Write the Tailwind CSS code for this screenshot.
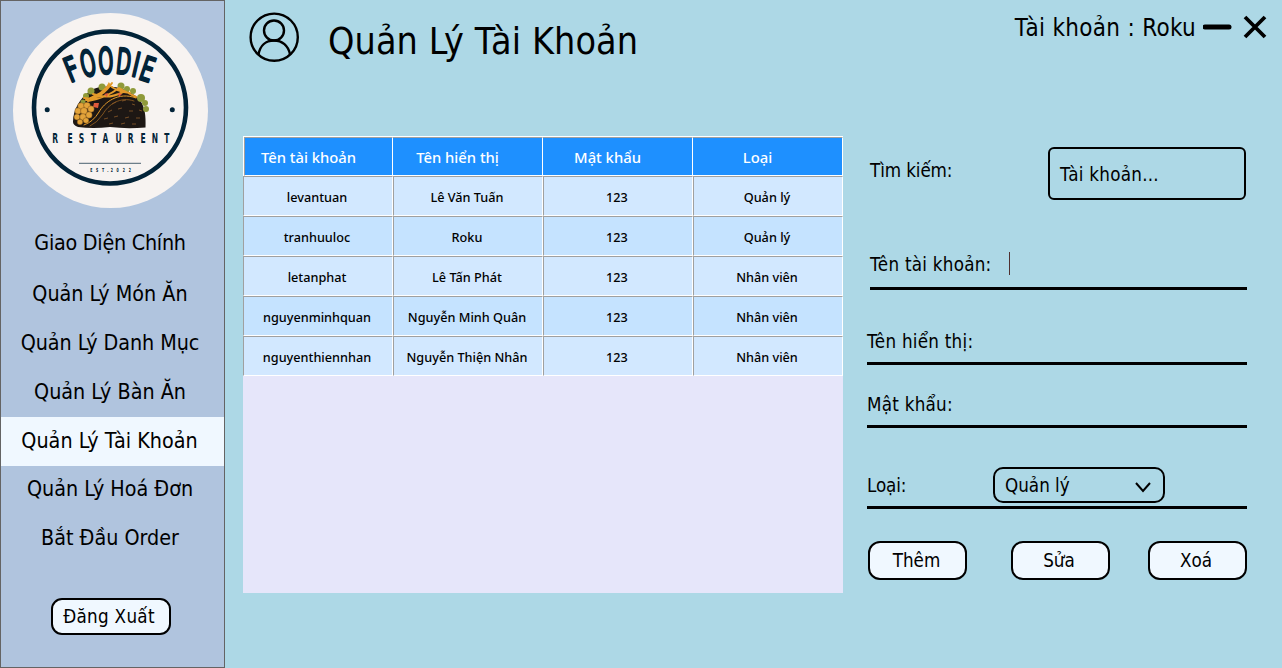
<!DOCTYPE html>
<html lang="vi">
<head>
<meta charset="utf-8">
<title>Quản Lý Tài Khoản</title>
<script src="https://cdn.jsdelivr.net/npm/@tailwindcss/browser@4"></script>
</head>
<body class="flex h-[668px] w-[1282px] overflow-hidden bg-[#add8e6] font-['DejaVu_Sans_Condensed','DejaVu_Sans',sans-serif] text-[18.67px] text-black">
  <aside class="flex w-[225px] shrink-0 flex-col border border-[#646464] bg-[#b0c4de]">
    <svg class="ml-3 mt-3 block shrink-0" width="195" height="195" viewBox="13 13 195 195">
      <circle cx="110.5" cy="110.5" r="97.5" fill="#f7f3f1"/>
      <circle cx="110" cy="107.5" r="76" fill="none" stroke="#022338" stroke-width="4.6"/>
      <circle cx="47.2" cy="109.8" r="2.5" fill="#022338"/><circle cx="172.3" cy="109.8" r="2.5" fill="#022338"/>
      <g fill="#022338" stroke="#022338" stroke-width="2.2" stroke-linejoin="round" font-size="34" text-anchor="middle" font-family="DejaVu Sans Condensed">
        <text transform="translate(76 80.5) rotate(-22) scale(.72 1)">F</text>
        <text transform="translate(90.500 76) rotate(-12) scale(.62 1.06)">O</text>
        <text transform="translate(106.500 73.5) rotate(-3) scale(.62 1.06)">O</text>
        <text transform="translate(122.5 74) rotate(6) scale(.62 1.04)">D</text>
        <text transform="translate(133.5 76.500) rotate(13) scale(.7 1)">I</text>
        <text transform="translate(143.5 80.5) rotate(19) scale(.66 1)">E</text>
      </g>
      <path d="M73 122C73 110 79 99 91 90C106 83 127 87 139 99C145 106 146 116 145.500 127.500Q126 129 110 127Q93 129 78 127Q73 125 73 122Z" fill="#1d1714"/>
      <g fill="#8f9a3a">
        <circle cx="91" cy="91" r="3.500"/><circle cx="86" cy="96" r="3"/><circle cx="102" cy="87" r="3.500"/><circle cx="121" cy="86" r="3.500"/><circle cx="127" cy="89" r="3"/><circle cx="133" cy="91" r="3"/><circle cx="141" cy="98" r="4"/><circle cx="145" cy="103" r="3"/><circle cx="146" cy="109" r="3"/><circle cx="83" cy="102" r="2.500"/>
      </g>
      <g fill="none" stroke="#e39a2b" stroke-width="2" stroke-linecap="round">
        <path d="M84 98Q100 101 112 83M88 101Q106 98 119 88Q126 92 136 97M96 96Q106 90 109 84Q114 91 130 93M93 94Q108 100 123 92M86 100Q97 95 104 91"/>
        <path d="M136 98C118 91 104 103 99 112Q93 122 84 125" stroke-width="1"/>
        <path d="M134 101C120 96 108 105 103 114Q97 123 90 126" stroke="#a96d24" stroke-width=".7"/>
      </g>
      <path d="M94 103L99 103L98 108L93 107ZM104 94L108 93L107 97ZM118 93L122 94L119 97Z" fill="#df5a3c"/>
      <g fill="#e3a33a" stroke="#6b4316" stroke-width=".4">
        <circle cx="81" cy="106" r="3.300"/><circle cx="87" cy="105.500" r="3.300"/><circle cx="78" cy="111" r="3.200"/><circle cx="84" cy="111" r="3.500"/><circle cx="91" cy="109" r="3.200"/><circle cx="77" cy="117" r="3"/><circle cx="83" cy="117" r="3.300"/><circle cx="89" cy="115" r="3.200"/><circle cx="80" cy="122" r="2.800"/><circle cx="86" cy="120.500" r="2.800"/>
      </g>
      <path d="M112 104l4-2M122 101l4-1M132 104l3 1M108 112l4-2M118 109l4-1M129 111l4 0M139 110l3 1M104 119l4-1M114 117l4-1M125 118l4-1M136 118l4 0M109 124l4-1M121 124l4-1M132 124l4 0" stroke="#8b5b2a" stroke-width=".8" fill="none"/>
      <text transform="scale(.62 1)" x="88.700 108.700 127.200 146.600 165.400 186.100 206 226.700 244.800 265" y="142.900" dx="-4.500" font-size="13.500" font-weight="700" fill="#022338" font-family="DejaVu Sans Condensed">RESTAURENT</text>
      <path d="M79 163.300H141" stroke="#022338" stroke-width=".7"/>
      <text transform="scale(.62 1)" x="145.500 155 164.500 173 178.500 188 198 207.500" y="171.700" font-size="5.600" font-weight="700" fill="#022338" font-family="DejaVu Sans Condensed">EST.2022</text>
    </svg>
    <nav class="mt-[11px] flex flex-col text-center text-[21.33px] leading-[47px]">
      <a class="h-[51px] pr-[5px] tracking-[-0.25px]">Giao Diện Chính</a>
      <a class="h-[49px] pr-[5px]">Quản Lý Món Ăn</a>
      <a class="h-[49px] pr-[5px] tracking-[-0.07px]">Quản Lý Danh Mục</a>
      <a class="h-[49px] pr-[5px]">Quản Lý Bàn Ăn</a>
      <a class="h-[49px] bg-[#f0f8ff] pr-[6px]">Quản Lý Tài Khoản</a>
      <a class="-mt-px h-[49px] pr-[5px]">Quản Lý Hoá Đơn</a>
      <a class="h-[49px] pr-[5px]">Bắt Đầu Order</a>
    </nav>
    <button class="ml-[50px] mt-[35px] h-[37px] w-[120px] rounded-[11px] border-2 border-black bg-[#f0f8ff] pr-1 leading-[34px] tracking-[0.3px]">Đăng Xuất</button>
  </aside>

  <main class="flex flex-1 flex-col">
    <header class="flex h-[136px] items-start">
      <svg class="ml-6 mt-3 shrink-0" width="51" height="51" viewBox="249 12 51 51" fill="none" stroke="#000" stroke-width="2.4">
        <circle cx="274.200" cy="37.200" r="23.600"/><circle cx="274" cy="30.500" r="10"/><path d="M258.500 54.500C260 45.500 266 40.500 274 40.500S288.500 45.500 290 54.500"/>
      </svg>
      <h1 class="ml-[28px] mt-[11px] whitespace-nowrap text-[37.33px] leading-[60px] tracking-[0.1px]">Quản Lý Tài Khoản</h1>
      <div class="ml-auto mt-[7px] flex items-center pr-[15px]">
        <span class="mr-[7px] whitespace-nowrap pt-[2px] text-2xl leading-[38px] tracking-[0.3px]">Tài khoản : Roku</span>
        <svg width="64" height="40" viewBox="1203 7 64 40" fill="none" stroke="#000"><path d="M1205 27H1229" stroke-width="5" stroke-linecap="round"/><path d="M1245 17L1265 37M1265 17L1245 37" stroke-width="3.800"/></svg>
      </div>
    </header>

    <div class="flex">
      <section class="ml-[18px] h-[457px] w-[600px] shrink-0 bg-[#e6e6fa] font-['Noto_Sans',sans-serif] font-medium">
        <div class="grid h-10 grid-cols-[149px_150px_150px_150px] border-l border-t border-white text-center text-[14.8px] leading-[38px] text-white [&>div]:border-b [&>div]:border-r [&>div]:border-t [&>div]:border-b-white [&>div]:border-r-white [&>div]:border-t-[#a0a0a0] [&>div]:bg-[#1e90ff] [&>div]:pr-5 [&>div]:h-[39px]">
          <div class="border-l border-l-[#a0a0a0]">Tên tài khoản</div><div>Tên hiển thị</div><div>Mật khẩu</div><div>Loại</div>
        </div>
        <div class="grid grid-cols-[150px_150px_150px_150px] text-center text-[12.7px] leading-10 [&>div]:h-10 [&>div]:border [&>div]:border-b-white [&>div]:border-l-[#a0a0a0] [&>div]:border-r-white [&>div]:border-t-[#a0a0a0] [&>div]:bg-[#d2e8ff] [&>div]:pr-[2px] [&>div:nth-child(8n+5)]:bg-[#c5e3ff] [&>div:nth-child(8n+6)]:bg-[#c5e3ff] [&>div:nth-child(8n+7)]:bg-[#c5e3ff] [&>div:nth-child(8n+8)]:bg-[#c5e3ff]">
          <div>levantuan</div><div>Lê Văn Tuấn</div><div>123</div><div>Quản lý</div>
          <div>tranhuuloc</div><div>Roku</div><div>123</div><div>Quản lý</div>
          <div>letanphat</div><div>Lê Tấn Phát</div><div>123</div><div>Nhân viên</div>
          <div>nguyenminhquan</div><div>Nguyễn Minh Quân</div><div>123</div><div>Nhân viên</div>
          <div>nguyenthiennhan</div><div>Nguyễn Thiện Nhân</div><div>123</div><div>Nhân viên</div>
        </div>
      </section>

      <form class="ml-6 flex w-[380px] flex-col pt-[11px] tracking-[0.25px]">
        <div class="flex h-[53px] pl-[3px]">
          <label class="leading-[48px] tracking-[-0.1px]">Tìm kiếm:</label>
          <div class="ml-auto mr-px h-[53px] w-[198px] rounded-md border-2 border-black pl-[10px] leading-[51px]">Tài khoản...</div>
        </div>
        <div class="ml-[3px] mt-[50px] flex h-[40px] items-start border-b-[3px] border-black leading-[30px]">
          <label>Tên tài khoản:</label><span class="ml-[18px] mt-[2px] h-[23px] w-px bg-[#503030]"></span>
        </div>
        <div class="mt-[36px] flex h-[39px] items-start border-b-[3px] border-black leading-8"><label>Tên hiển thị:</label></div>
        <div class="mt-[24px] flex h-[39px] items-start border-b-[3px] border-black leading-8"><label>Mật khẩu:</label></div>
        <div class="mt-[39px] flex h-[42px] items-start border-b-[3px] border-black"><label class="w-[126px] leading-[38px] tracking-[-0.1px]">Loại:</label>
          <div class="flex h-[36px] w-[172px] items-center justify-between rounded-[10px] border-2 border-black pl-[10px] pr-3 leading-[31px] tracking-[0px]">Quản lý
            <svg class="mt-[3px]" width="16" height="12" viewBox="0 0 16 12" fill="none" stroke="#000" stroke-width="2"><path d="M1 2L8 10L15 2"/></svg></div>
        </div>
        <div class="ml-px mt-8 flex tracking-normal">
          <button type="button" class="h-[39px] w-[99px] rounded-xl border-2 border-black bg-[#f0f8ff] pr-[2px] leading-[35px]">Thêm</button>
          <button type="button" class="ml-11 h-[39px] w-[99px] rounded-xl border-2 border-black bg-[#f0f8ff] pr-[3px] leading-[35px]">Sửa</button>
          <button type="button" class="ml-auto h-[39px] w-[99px] rounded-xl border-2 border-black bg-[#f0f8ff] pr-[3px] leading-[35px]">Xoá</button>
        </div>
      </form>
    </div>
  </main>
</body>
</html>
